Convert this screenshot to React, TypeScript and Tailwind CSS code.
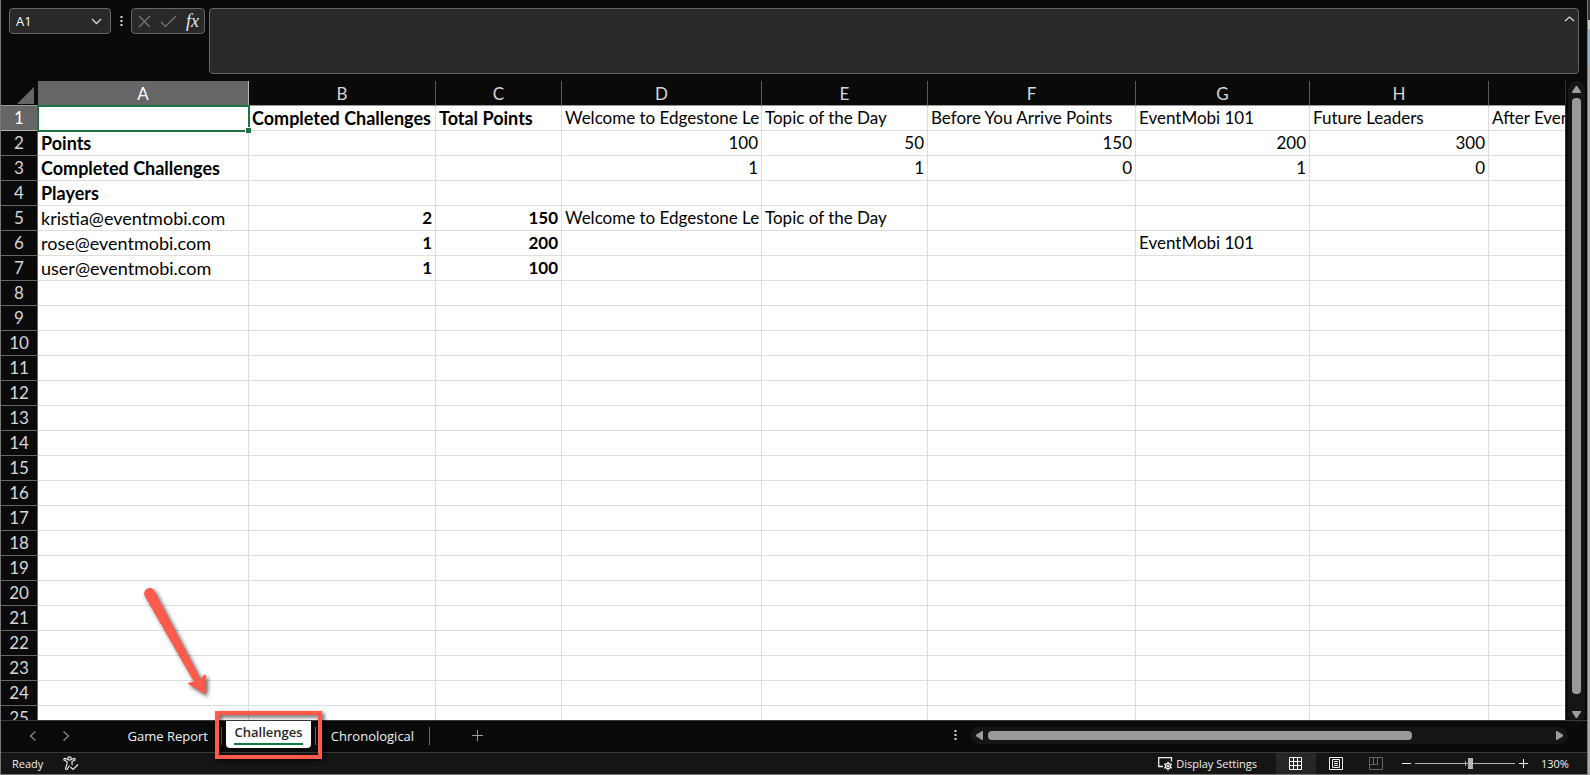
import type { ReactNode } from "react";

type Cell = { text: string; bold?: boolean; right?: boolean; large?: boolean };

const columns = ["A", "B", "C", "D", "E", "F", "G", "H", "I"];

const label = (text: string): Cell => ({ text });
const player = (text: string): Cell => ({ text, large: true });
const strong = (text: string): Cell => ({ text, bold: true, large: true });
const num = (text: string): Cell => ({ text, right: true });
const total = (text: string): Cell => ({ text, right: true, bold: true });

const data: Record<string, Cell> = {
  B1: strong("Completed Challenges"),
  C1: strong("Total Points"),
  D1: label("Welcome to Edgestone Le"),
  E1: label("Topic of the Day"),
  F1: label("Before You Arrive Points"),
  G1: label("EventMobi 101"),
  H1: label("Future Leaders"),
  I1: label("After Event"),
  A2: strong("Points"),
  D2: num("100"),
  E2: num("50"),
  F2: num("150"),
  G2: num("200"),
  H2: num("300"),
  A3: strong("Completed Challenges"),
  D3: num("1"),
  E3: num("1"),
  F3: num("0"),
  G3: num("1"),
  H3: num("0"),
  A4: strong("Players"),
  A5: player("kristia@eventmobi.com"),
  B5: total("2"),
  C5: total("150"),
  D5: label("Welcome to Edgestone Le"),
  E5: label("Topic of the Day"),
  A6: player("rose@eventmobi.com"),
  B6: total("1"),
  C6: total("200"),
  G6: label("EventMobi 101"),
  A7: player("user@eventmobi.com"),
  B7: total("1"),
  C7: total("100"),
};

const rows = Array.from({ length: 25 }, (_, i) => i + 1);

function MoreDots() {
  return (
    <svg width="3" height="11" viewBox="0 0 3 11" fill="#d8d8d8" aria-hidden="true">
      <rect x="0.5" y="0" width="2" height="2" />
      <rect x="0.5" y="4" width="2" height="2" />
      <rect x="0.5" y="8" width="2" height="2" />
    </svg>
  );
}

function FormulaBar() {
  return (
    <div className="flex h-[81px] shrink-0 items-start pt-2 pr-2 pl-2">
      <div className="flex h-[26px] w-[102px] items-center rounded-[4px] border border-[#666] bg-[#292929] pr-2 pl-[6px]">
        <input
          aria-label="Name box"
          defaultValue="A1"
          className="w-full min-w-0 bg-transparent text-[13px] leading-5 text-white outline-none"
        />
        <button type="button" aria-label="Open name list" className="shrink-0">
          <svg width="11" height="7" viewBox="0 0 11 7" fill="none" stroke="#d8d8d8" strokeWidth="1.3">
            <path d="M1 1l4.5 4.5L10 1" />
          </svg>
        </button>
      </div>
      <div className="flex h-[26px] w-5 items-center justify-center">
        <MoreDots />
      </div>
      <div className="flex h-[26px] w-[74px] items-center justify-between rounded-[4px] border border-[#666] bg-[#292929] pr-[5px] pl-[6px]">
        <button type="button" aria-label="Cancel">
          <svg width="13" height="13" viewBox="0 0 13 13" fill="none" stroke="#777" strokeWidth="1.2">
            <path d="M1 1l11 11M12 1L1 12" />
          </svg>
        </button>
        <button type="button" aria-label="Enter">
          <svg width="17" height="13" viewBox="0 0 17 13" fill="none" stroke="#777" strokeWidth="1.2">
            <path d="M1 7l4.5 4.5L16 1" />
          </svg>
        </button>
        <button
          type="button"
          aria-label="Insert function"
          className="font-['Liberation_Serif',serif] text-[18px] leading-5 text-[#e6e6e6] italic"
        >
          fx
        </button>
      </div>
      <div className="ml-1 flex h-[66px] min-w-0 flex-1 items-start rounded-[4px] border border-[#666] bg-[#292929] pr-[3px]">
        <textarea
          aria-label="Formula"
          className="h-full min-w-0 flex-1 resize-none bg-transparent p-1 text-[13px] text-white outline-none"
        />
        <button type="button" aria-label="Collapse formula bar" className="pt-[7px]">
          <svg className="block" width="11" height="6" viewBox="0 0 11 6" fill="none" stroke="#d8d8d8" strokeWidth="1.3">
            <path d="M1 5l4.5-4L10 5" />
          </svg>
        </button>
      </div>
    </div>
  );
}

function Sheet() {
  return (
    <div className="min-w-0 flex-1 overflow-hidden border-r border-[#333] bg-white">
      <table className="w-[1700px] table-fixed border-separate border-spacing-0 font-['Lato','Liberation_Sans',sans-serif] text-[17px] leading-6 text-black">
        <colgroup>
          <col className="w-[37px]" />
          <col className="w-[211px]" />
          <col className="w-[187px]" />
          <col className="w-[126px]" />
          <col className="w-[200px]" />
          <col className="w-[166px]" />
          <col className="w-[208px]" />
          <col className="w-[174px]" />
          <col className="w-[179px]" />
          <col />
        </colgroup>
        <thead>
          <tr>
            <th className="h-[25px] border-b border-[#999] bg-[#0a0a0a] p-0">
              <svg className="mt-1 ml-4" width="17" height="17" viewBox="0 0 17 17" fill="#666" aria-hidden="true">
                <path d="M17 0v17H0z" />
              </svg>
            </th>
            {columns.map((name) => (
              <th
                key={name}
                scope="col"
                className={
                  name === "A"
                    ? "h-[25px] border-r border-b border-r-[#b5b5b5] border-b-[#999] bg-[#666] p-0 pt-[2px] leading-[22px] font-normal text-white"
                    : "h-[25px] border-r border-b border-r-[#5a5a5a] border-b-[#999] bg-[#0a0a0a] p-0 pt-[2px] leading-[22px] font-normal text-[#d6d6d6]"
                }
              >
                {name}
              </th>
            ))}
          </tr>
        </thead>
        <tbody>
          {rows.map((row) => (
            <tr key={row}>
              <th
                scope="row"
                className={
                  row === 1
                    ? "h-[25px] border-r border-b border-[#b5b5b5] bg-[#666] p-0 font-normal text-white"
                    : "h-[25px] border-r border-b border-[#666] bg-[#0a0a0a] p-0 font-normal text-[#d6d6d6]"
                }
              >
                {row}
              </th>
              {columns.map((name) => {
                const key = name + row;
                if (key === "A1") {
                  return (
                    <td key={key} className="relative h-[25px] p-0">
                      <div className="absolute -inset-x-px -top-px -bottom-px border-2 border-[#1f7244]" />
                      <div className="absolute -right-[2px] -bottom-[2px] size-[6px] border-t border-l border-white bg-[#1f7244]" />
                    </td>
                  );
                }
                const cell = data[key];
                return (
                  <td
                    key={key}
                    className={
                      "h-[25px] overflow-hidden border-r border-b border-[#dedede] py-0 pl-[3px] whitespace-nowrap" +
                      (cell?.bold ? " font-bold" : "") +
                      (cell?.large ? " text-[18px] leading-6" : "") +
                      (cell?.right ? " pr-[3px] text-right" : " pr-0")
                    }
                  >
                    {cell?.text}
                  </td>
                );
              })}
            </tr>
          ))}
        </tbody>
      </table>
    </div>
  );
}

function VerticalScroll() {
  return (
    <div className="-mb-[3px] flex w-[21px] shrink-0 pr-[2px] pl-[2px]">
      <div className="flex w-full flex-col items-center rounded-[9px] bg-[#151515] py-[5px]">
        <button type="button" aria-label="Scroll up">
          <svg className="block" width="9" height="7" viewBox="0 0 9 7" fill="#9c9c9c">
            <path d="M3.8 0h1.4L9 6v1H0V6z" />
          </svg>
        </button>
        <div className="mt-[5px] mb-[17px] w-[9px] flex-1 rounded-[4px] bg-[#9a9a9a]" />
        <button type="button" aria-label="Scroll down">
          <svg className="block" width="9" height="7" viewBox="0 0 9 7" fill="#9c9c9c">
            <path d="M3.8 7h1.4L9 1V0H0v1z" />
          </svg>
        </button>
      </div>
    </div>
  );
}

function Separator() {
  return <div className="h-[18px] w-px bg-[#6a6a6a]" />;
}

function TabBar() {
  return (
    <div className="flex h-8 shrink-0 items-center border-t border-[#3a3a3a] pb-[2px] text-[13px] leading-5 text-[#f0f0f0]">
      <button type="button" aria-label="Previous sheet" className="ml-7">
        <svg className="block" width="8" height="10" viewBox="0 0 8 10" fill="none" stroke="#8a8a8a" strokeWidth="1.3">
          <path d="M6.5 0.5L1.5 5l5 4.5" />
        </svg>
      </button>
      <button type="button" aria-label="Next sheet" className="ml-[25px]">
        <svg className="block" width="8" height="10" viewBox="0 0 8 10" fill="none" stroke="#8a8a8a" strokeWidth="1.3">
          <path d="M1.5 0.5l5 4.5-5 4.5" />
        </svg>
      </button>
      <button type="button" className="w-[151px] pr-[13px] text-right whitespace-nowrap">
        Game Report
      </button>
      <div className="relative flex h-full items-center">
        <Separator />
        <div className="flex h-full w-[93px] items-start justify-center">
          <button
            type="button"
            aria-current="page"
            className="flex h-[27px] w-[85px] flex-col rounded-b-[4px] bg-white px-2 pt-px text-[#262626]"
          >
            <span className="w-full font-semibold">Challenges</span>
            <span className="mt-px h-[2px] w-full bg-[#107c41]" />
          </button>
        </div>
        <Separator />
        <div className="pointer-events-none absolute -top-[10px] -right-[6px] h-12 w-[107px] border-4 border-[#ff5a4b] drop-shadow-[2px_2px_2px_rgba(0,0,0,0.7)]" />
        <svg
          className="pointer-events-none absolute -top-[138px] -left-[84px] drop-shadow-[2px_2px_2px_rgba(0,0,0,0.65)]"
          width="80"
          height="120"
          viewBox="0 0 80 120"
          aria-hidden="true"
        >
          <path
            d="M7.5 12.5C6 8 10 4.500 13.500 5Q16.500 5.500 18 9L63.500 96 67.500 91.500Q69 91 69 93L68.500 111.500 52 101.500Q50.500 100.500 51.500 99.800L57 98.800z"
            fill="#ff5a4b"
          />
        </svg>
      </div>
      <button type="button" className="w-[113px] text-center whitespace-nowrap">
        Chronological
      </button>
      <Separator />
      <button type="button" aria-label="New sheet" className="ml-[42px]">
        <svg className="block" width="11" height="11" viewBox="0 0 11 11" stroke="#9a9a9a">
          <path d="M0 5.5h11M5.500 0v11" />
        </svg>
      </button>
      <div className="flex-1" />
      <MoreDots />
      <div className="mr-[19px] ml-[14px] flex h-[17px] w-[597px] max-w-[45%] items-center rounded-[9px] bg-[#151515] px-[5px]">
        <button type="button" aria-label="Scroll left">
          <svg className="block" width="7" height="9" viewBox="0 0 7 9" fill="#9c9c9c">
            <path d="M0 3.800v1.400L6 9h1V0H6z" />
          </svg>
        </button>
        <div className="mr-[3px] ml-[5px] flex-1">
          <div className="h-[9px] w-3/4 rounded-[4px] bg-[#9a9a9a]" />
        </div>
        <button type="button" aria-label="Scroll right">
          <svg className="block" width="7" height="9" viewBox="0 0 7 9" fill="#9c9c9c">
            <path d="M7 3.800v1.400L1 9H0V0h1z" />
          </svg>
        </button>
      </div>
    </div>
  );
}

function ViewButton({ name, active, children }: { name: string; active?: boolean; children: ReactNode }) {
  return (
    <button
      type="button"
      aria-label={name}
      className={
        active
          ? "flex h-full w-10 items-center justify-center bg-[#262626]"
          : "flex h-full w-10 items-center justify-center"
      }
    >
      <svg width="14" height="14" viewBox="0 0 14 14" fill="none">
        {children}
      </svg>
    </button>
  );
}

function StatusBar() {
  return (
    <div className="flex h-[22px] shrink-0 items-center border-t border-[#3a3a3a] bg-[#151515] text-[11px] leading-4 font-medium text-[#f0f0f0]">
      <span className="w-[50px] pl-[11px]">Ready</span>
      <button type="button" aria-label="Accessibility" className="ml-3">
        <svg className="block" width="16" height="15" viewBox="0 0 16 15" fill="none" stroke="#e6e6e6" strokeWidth="1.2">
          <circle cx="6.500" cy="2.500" r="1.700" />
          <path d="M4.800 3.500L2 2.400Q.500 2.500 1 4L4 5.500V8L2.500 12.500Q3 14 4.300 13.300L6.500 9.500 M8.200 3.500L11 2.400Q12.500 2.500 12 4L9 5.500V8L9.500 9" />
          <path d="M7.500 11l2.500 2.500 5-5" />
        </svg>
      </button>
      <div className="flex-1" />
      <button type="button" className="mr-[19px] flex items-center gap-[3px] whitespace-nowrap">
        <svg width="15" height="14" viewBox="0 0 15 14" fill="none" stroke="#f0f0f0" strokeWidth="1.300">
          <path d="M5 9.500H.700V.700H13.500V4.500" />
          <circle cx="10" cy="9" r="2.600" />
          <circle cx="10" cy="9" r=".7" />
          <path d="M10 4.800v1.600M10 11.600v1.800M6.300 6.900l1.400.8M12.300 10.300l1.400.8M6.300 11.100l1.400-.8M12.300 7.700l1.400-.8" />
        </svg>
        Display Settings
      </button>
      <ViewButton name="Normal view" active>
        <path d="M.500.500h12v12H.500zM4.500.500v12M8.500.500v12M.500 4.500h12M.500 8.500h12" stroke="#fff" />
      </ViewButton>
      <ViewButton name="Page layout view">
        <path d="M.500.500h13v12H.500zM3.500 2.500h7v8h-7zM5 4.500h4M5 6.500h4M5 8.500h4" stroke="#f0f0f0" />
      </ViewButton>
      <ViewButton name="Page break view">
        <path d="M.500.500h13v12H.500zM4.500.500v7M8.500.500v7M.500 7.500h8" stroke="#666" />
      </ViewButton>
      <button type="button" aria-label="Zoom out" className="ml-[6px]">
        <svg className="block" width="9" height="9" viewBox="0 0 9 9" stroke="#f0f0f0">
          <path d="M0 4.500h9" />
        </svg>
      </button>
      <div className="relative mx-1 flex items-center">
        <div className="absolute left-1/2 h-[5px] w-px bg-[#b0b0b0]" />
        <input
          type="range"
          aria-label="Zoom"
          min="0"
          max="100"
          defaultValue="56"
          className="relative h-[11px] w-[100px] appearance-none bg-[linear-gradient(#b0b0b0,#b0b0b0)] bg-[length:100%_1px] bg-center bg-no-repeat [&::-webkit-slider-thumb]:h-[11px] [&::-webkit-slider-thumb]:w-[5px] [&::-webkit-slider-thumb]:appearance-none [&::-webkit-slider-thumb]:bg-[#b5b5b5]"
        />
      </div>
      <button type="button" aria-label="Zoom in">
        <svg className="block" width="9" height="9" viewBox="0 0 9 9" stroke="#f0f0f0">
          <path d="M0 4.500h9M4.500 0v9" />
        </svg>
      </button>
      <span className="mr-[18px] ml-[13px] w-7">130%</span>
    </div>
  );
}

export default function App() {
  return (
    <div className="flex h-screen overflow-hidden bg-[#0a0a0a] font-['Open_Sans','Noto_Sans',sans-serif]">
      <div className="flex min-w-0 flex-1 flex-col border-r border-b border-l border-[#777]">
        <FormulaBar />
        <div className="flex min-h-0 flex-1">
          <Sheet />
          <VerticalScroll />
        </div>
        <TabBar />
        <StatusBar />
      </div>
      <div className="flex w-[2px] shrink-0 flex-col bg-[#aaa]" aria-hidden="true">
        <div className="h-5 bg-[#333]" />
        <div className="h-[9px] bg-[#ccc]" />
        <div className="h-9 bg-[#8fb3cc]" />
      </div>
    </div>
  );
}
